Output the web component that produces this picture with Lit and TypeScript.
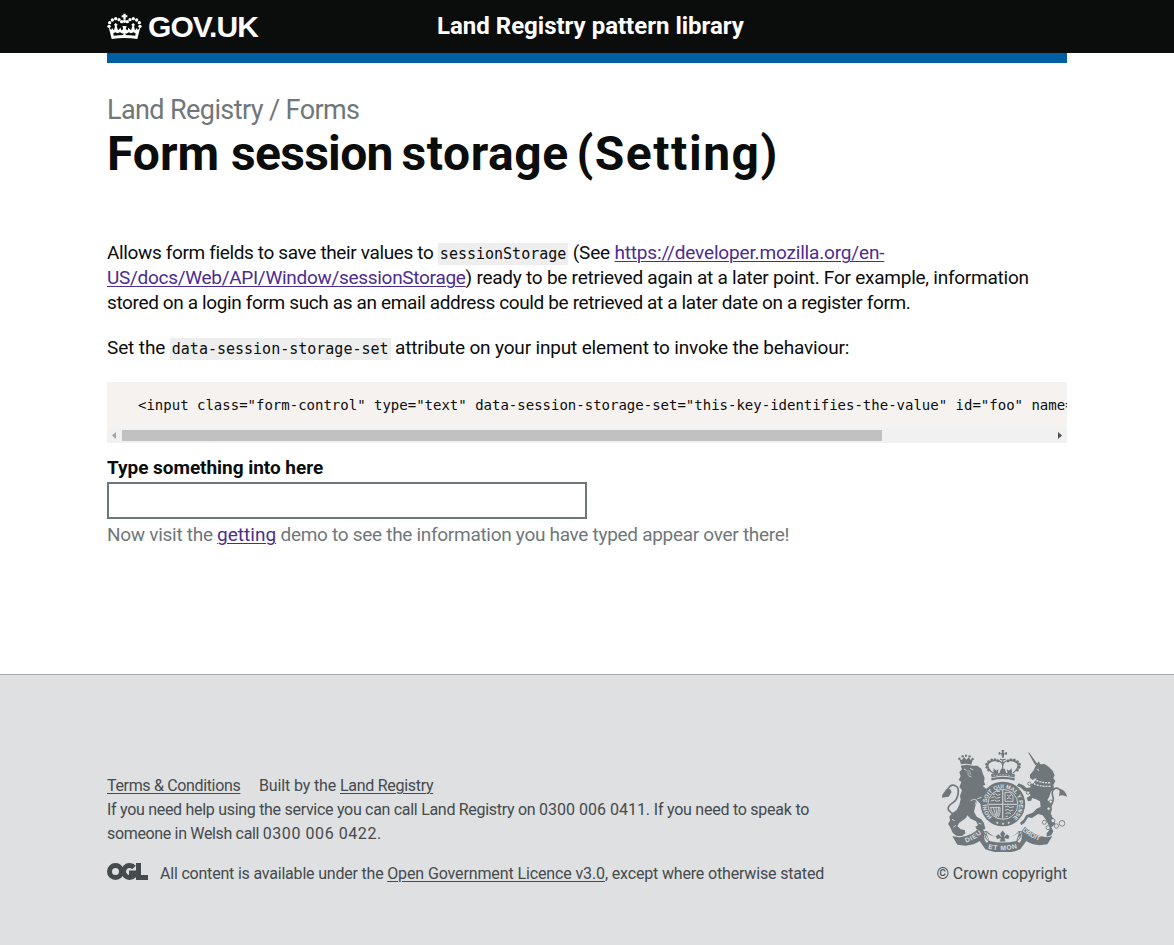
import { LitElement, html, css, svg } from "lit";
import { customElement } from "lit/decorators.js";

const beads = (pts: number[][], r: number) =>
  pts.map(([x, y]) => svg`<circle cx=${x} cy=${y} r=${r} />`);

@customElement("crown-logo")
class CrownLogo extends LitElement {
  static styles = css`
    :host { display: block; width: 36px; height: 27px; }
    svg { display: block; }
  `;
  render() {
    return html`<svg width="36" height="27" viewBox="21 36 108 81" fill="#fff">
      <path d="M70 38h7v5h5v6h-5v7h-7v-7h-5v-6h5z" />
      ${beads([[27, 76], [29, 65], [37, 57], [47, 53], [57, 56], [65, 62], [82, 62], [90, 56], [100, 53], [110, 57], [118, 65], [120, 76], [73.5, 61]], 5)}
      <path fill-rule="evenodd" d="M26 79l8 8 2-6 6 7 3-13-3-4 5-5 6 5-3 4 4 13 8-8 2 8 6-3-3-10h13l-3 10 6 3 2-8 8 8 4-13-3-4 6-5 5 5-3 4 3 13 6-7 2 6 8-8-9 35q-38-6-77 0zM40 97l1 7q32-4 65 0l1-7-7-3-7 3-8-4-5 5-7-7-6 7-6-5-8 4-7-3z" />
      <path d="M70 80h7v10h8v6h-8v6h-7v-6h-8v-6h8z" />
    </svg>`;
  }
}

@customElement("royal-arms")
class RoyalArms extends LitElement {
  static styles = css`
    :host { display: block; width: 125px; height: 102px; }
    svg { display: block; }
    text { font-family: "Liberation Sans", Arial, sans-serif; font-weight: 700; }
  `;
  render() {
    return html`<svg width="125" height="102" viewBox="36 30 375 306" fill="#6f777b">
      <defs>
        <path id="garter" d="M186.500 231A49 49 0 1 1 250.500 231" />
        <path id="dieu" d="M108 308Q137 299 158 277" />
        <path id="mon" d="M174 325Q218 337 264 324" />
        <path id="droit" d="M277 272Q300 294 336 305" />
      </defs>

      <!-- lion -->
      <g transform="translate(30 30)">
        <path d="M63 43L58 27l8 3 6-9 7 8 8-8 4 8 8-3-5 18q-16-5-31-1z" />
        ${beads([[78, 17], [58, 26], [68, 19], [89, 19], [98, 27]], 3.5)}
        <path d="M62 47L80 44 98 47 112 47 124 56 129 72 134 84 132 95 136 104 128 108 140 118 134 132 137 150 133 168 124 164 112 152 106 168 102 185 110 200 124 208 132 220 136 236 128 240 110 238 106 230 114 226 108 214 92 206 82 196 78 204 58 218 52 228 62 238 74 240 76 250 66 258 50 258 38 248 30 230 24 222 30 212 28 200 34 192 50 180 58 164 62 148 60 138 66 120 58 112 64 96 56 90 62 78 58 66 66 58Z" />
        <path d="M50 195C20 185 18 172 36 160C58 148 60 112 46 107C34 102 23 112 21 126" fill="none" stroke="#6f777b" stroke-width="5" />
        <path d="M20 116L7 134 6 143 26 140 35 126 31 118Z" />
        <g fill="none" stroke="#dee0e2" stroke-width="2.500">
          <path d="M72 57l8 4M90 55l10 5M84 76l10 5M92 152q9-7 18-2l-4 14M112 146l20-6M36 208l8 4M40 232l8-6M116 220l8 2" />
        </g>
        <path d="M82 60l8 0 5 14-7 4-8-5z" fill="#8d9497" />
      </g>

      <!-- royal crown -->
      <path d="M214 41l-5-5h-3v8h3l5-2 2 11h5l2-11 5 2h3v-8h-3l-5 5-2-5 2-6h-9l2 6z" />
      <g fill="none" stroke="#6f777b">
        <path d="M190 100Q169 84 175 71Q188 56 209 64Q219 68 218 78Q218 68 228 64Q249 56 263 71Q268 84 248 100M210 57q8 5 17 0M218 60v42" stroke-width="3.500" />
        <path d="M184 108q34-11 70 0" stroke-width="9" />
        <path d="M184 118q34-9 70 0" stroke-width="7" />
      </g>
      ${beads([[176, 90], [171, 82], [170, 73], [176, 65], [185, 60], [195, 59], [204, 62], [262, 90], [267, 82], [268, 73], [262, 65], [253, 60], [243, 59], [234, 62]], 4.5)}
      <path d="M190 102l1-17 8 7 7-5-3 14zM246 102l-1-17-8 7-7-5 3 14zM208 100l5-14h11l5 14z" />
      <path d="M190 108q28-7 57 0" stroke="#dee0e2" stroke-width="2" stroke-dasharray="5 4" fill="none" />

      <!-- garter and shield -->
      <circle cx="218.500" cy="192" r="67" />
      <circle cx="218.500" cy="193" r="45" fill="none" stroke="#dee0e2" stroke-width="2.500" />
      <text fill="#dee0e2" font-size="17"><textPath href="#garter">HONI SOIT QUI MAL Y PENSE</textPath></text>
      <path d="M218 150v86M176 193h85" stroke="#c3c7c9" stroke-width="4" />
      <g fill="none" stroke="#dee0e2" stroke-width="2.500">
        <path d="M188 164l9-3 5 5 9-3M184 173l9-3 6 5 12-3M182 183l12-3 6 4 10-3M200 155l10-1M225 157h15l9 12v15h-24zM231 165l6 4 6-4M230 177l7-4 7 4M225 201l9-3 6 5 12-3M225 211l9-3 6 5 10-3M226 221l8-3 9 3M227 230l7-2" />
        <path d="M182 202q2 20 20 30M190 202l7 24M198 202l3 26M206 202l-3 26M181 202h29q2 16-5 30" />
      </g>
      <g fill="#dee0e2"><circle cx="202" cy="248" r="3" /><circle cx="219" cy="251" r="3" /><circle cx="236" cy="248" r="3" /></g>

      <!-- unicorn -->
      <g transform="translate(258 30)">
        <path d="M36 7l4 1 24 34-6 4z" />
        <path d="M60 46L68 34 73 43 86 42 98 50 110 62 116 76 112 84 118 94 112 104 114 116 104 126 100 140 94 150 104 160 108 176 104 192 112 206 118 222 106 232 112 244 106 256 92 260 92 250 100 240 98 226 90 210 80 196 66 192 48 204 36 202 26 218 16 226 12 218 24 208 30 196 50 188 62 176 74 170 72 154 60 148 48 144 46 152 36 154 32 144 44 136 40 128 24 122 12 112 2 108 8 100 22 106 32 114 44 112 42 104 54 98 62 84 50 90 42 84 42 74 52 62Z" />
        <path d="M106 200C84 172 122 162 110 138C102 112 130 106 136 128" fill="none" stroke="#6f777b" stroke-width="5" />
        <path d="M132 116q16 3 21 24-14-8-24-2z" />
        <path d="M46 97q22 14 60 12M54 87q18 13 52 11" stroke="#dee0e2" stroke-width="4" stroke-dasharray="6 3" fill="none" />
        <path d="M62 58l7 3" stroke="#dee0e2" stroke-width="3" />
        <g fill="#dee0e2" stroke="#6f777b" stroke-width="2.500">
          <circle cx="85" cy="217" r="6" /><circle cx="96" cy="233" r="6" /><circle cx="111" cy="212" r="6" />
          <circle cx="121" cy="228" r="6.500" /><circle cx="138" cy="220" r="8.500" /><circle cx="98" cy="176" r="5" />
          <circle cx="104" cy="155" r="5" /><circle cx="40" cy="101" r="5" /><circle cx="36" cy="128" r="5" />
        </g>
      </g>

      <!-- motto ribbon -->
      <path d="M67 289l22 3Q132 285 149 260l20 20 6-4q-17-12-11 24l5 8 7-3q-1-15-12-22l10-6q20 19 44 18 26 1 46-18l9 6q-10 9-11 22l7 3 5-8q6-36-12-24l7 4 16-20q27 27 65 32l17-3-15 24-23 3q-23-2-40-13l-18 25q-50 21-105 0l-17-25q-16 12-42 14l-25-3z" />
      <path d="M168 275q14 18 50 17 36 1 50-17l-9 28q-40 9-81 0z" fill="#dee0e2" />
      <path d="M163 278q2 18 14 28M274 278q-2 18-14 28" stroke="#6f777b" stroke-width="3" fill="none" />
      <path d="M218 271l-8 10 4 9-9-8-8 7 4 9 11-3-3 10h18l-3-10 11 3 4-9-8-7-9 8 4-9z" stroke="#dee0e2" stroke-width="1" />
      <g fill="#dee0e2" font-size="20">
        <text><textPath href="#dieu" textLength="55">DIEU</textPath></text>
        <text><textPath href="#mon" textLength="89">ET MON</textPath></text>
        <text font-size="19"><textPath href="#droit">DROIT</textPath></text>
      </g>
    </svg>`;
  }
}

@customElement("app-root")
class AppRoot extends LitElement {
  static styles = css`
    :host {
      display: flex; flex-direction: column; min-height: 945px; box-sizing: border-box;
      background: #dee0e2; color: #0b0c0c;
      font: 19px/25px Roboto, "Noto Sans", sans-serif;
    }
    * { box-sizing: border-box; }
    p, h1, pre { margin: 0; }
    a { color: #4c2c92; text-decoration: underline; text-underline-offset: 2px; text-decoration-thickness: 1px; }
    .wrap { width: 960px; margin: 0 auto; white-space: nowrap; }
    header { height: 53px; background: #0b0c0c; color: #fff; }
    header .wrap { display: flex; align-items: center; height: 53px; }
    .logo { display: flex; align-items: center; gap: 5px; width: 330px; }
    .gov { font: 700 30px/30px "Liberation Sans", Arial, sans-serif; letter-spacing: -0.95px; }
    .service { font-size: 24px; font-weight: 700; }
    .bar { height: 10px; background: #005ea5; }
    main { height: 621px; background: #fff; }
    .crumb { display: block; color: #6f777b; font-size: 27px; line-height: 30px; padding-top: 32px; letter-spacing: -0.6px; }
    h1 { font-size: 48px; line-height: 50px; font-weight: 700; padding-top: 4px; }
    .h-session { letter-spacing: -0.7px; word-spacing: -2.5px; }
    .h-storage { letter-spacing: 0.6px; word-spacing: -5px; }
    .h-setting { letter-spacing: 1.55px; }
    .intro { padding-top: 61px; }
    .line { display: block; }
    .set { padding-top: 20px; }
    .k35 { letter-spacing: -0.36px; }
    .k34 { letter-spacing: -0.34px; }
    .k36 { letter-spacing: -0.37px; }
    .k29 { letter-spacing: -0.295px; }
    .k28 { letter-spacing: -0.28px; }
    .k24 { letter-spacing: -0.245px; }
    .k20 { letter-spacing: -0.2px; }
    .k17 { letter-spacing: -0.165px; }
    .k12 { letter-spacing: -0.12px; }
    .wide { letter-spacing: 0.57px; }
    code { font: 15px/20px "DejaVu Sans Mono", monospace; background: #eee; padding: 2px; }
    .code { margin-top: 22px; height: 61px; background: #f5f2f0; overflow: hidden; display: flex; flex-direction: column; justify-content: space-between; }
    pre { font: 14px/20px "DejaVu Sans Mono", monospace; padding: 13px 0 0 31px; }
    .scroll { height: 15px; background: #f1f1f1; display: flex; align-items: center; justify-content: space-between; }
    .thumb { width: 760px; height: 11px; background: #c1c1c1; }
    .arrow { width: 15px; height: 15px; }
    .gap { flex: 1; }
    label { display: block; font-weight: 700; padding-top: 12px; letter-spacing: -0.04px; }
    input { display: block; width: 480px; height: 37px; margin: 2px 0 3px; border: 2px solid #6f777b; background: #fff; padding: 4px; }
    .hint { color: #6f777b; }
    footer { flex: 1; border-top: 1px solid #a1acb2; color: #454a4c; font-size: 16px; line-height: 24px; }
    footer a { color: #454a4c; }
    footer .wrap { display: flex; justify-content: space-between; padding-top: 75px; }
    .meta { padding-top: 24px; }
    .links { display: flex; gap: 18.500px; }
    .licence { display: flex; align-items: center; padding-top: 16px; gap: 12px; }
    .ogl { display: block; margin-top: -5px; }
    .arms { display: flex; flex-direction: column; align-items: flex-end; gap: 10px; }
  `;
  render() {
    return html`
      <header><div class="wrap">
        <div class="logo"><crown-logo></crown-logo><span class="gov">GOV.UK</span></div>
        <span class="service">Land Registry pattern library</span>
      </div></header>
      <main><div class="wrap">
        <div class="bar"></div>
        <span class="crumb">Land Registry / Forms</span>
        <h1>Form <span class="h-session">session </span><span class="h-storage">storage </span><span class="h-setting">(Setting)</span></h1>
        <p class="intro">
          <span class="line"><span class="k35">Allows form fields to save their values to </span><code>sessionStorage</code><span class="k20"> (See </span><a class="k17">https://developer.mozilla.org/en-</a></span>
          <span class="line"><a class="k29">US/docs/Web/API/Window/sessionStorage</a><span class="k24">) ready to be retrieved again at a later point. For example, information</span></span>
          <span class="line k36">stored on a login form such as an email address could be retrieved at a later date on a register form.</span>
        </p>
        <p class="set"><span class="k12">Set the </span><code>data-session-storage-set</code><span class="k17"> attribute on your input element to invoke the behaviour:</span></p>
        <div class="code">
          <pre>&lt;input class="form-control" type="text" data-session-storage-set="this-key-identifies-the-value" id="foo" name="foo"&gt;</pre>
          <div class="scroll">
            <svg class="arrow" viewBox="0 0 15 15"><path d="M9 4v7L5 7.500z" fill="#a3a3a3" /></svg>
            <div class="thumb"></div><div class="gap"></div>
            <svg class="arrow" viewBox="0 0 15 15"><path d="M6 4v7l4-3.500z" fill="#505050" /></svg>
          </div>
        </div>
        <label for="foo">Type something into here</label>
        <input id="foo" type="text" />
        <div class="hint"><span class="k28">Now visit the </span><a>getting</a><span class="k29"> demo to see the information you have typed appear over there!</span></div>
      </div></main>
      <footer><div class="wrap">
        <div class="meta">
          <div class="links"><a class="k34">Terms &amp; Conditions</a><span><span class="k12">Built by the </span><a class="k29">Land Registry</a></span></div>
          <div><span class="k29">If you need help using the service you can call Land Registry on </span>0300 006 0411.<span class="k24"> If you need to speak to</span></div>
          <div><span class="k34">someone in Welsh call </span><span class="wide">0300 006 0422.</span></div>
          <div class="licence">
            <svg class="ogl" width="41" height="17" viewBox="0 0 41 17" fill="none" stroke="#454a4c" stroke-width="5">
              <circle cx="8.500" cy="8.500" r="6" />
              <path d="M27 4.500A6 6 0 1 0 27 12.500V10h-5M31.500 0v14.500H41" />
            </svg>
            <span><span class="k20">All content is available under the </span><a class="k12">Open Government Licence v3.0</a><span class="k17">, except where otherwise stated</span></span>
          </div>
        </div>
        <div class="arms"><royal-arms></royal-arms><span class="k12">© Crown copyright</span></div>
      </div></footer>
    `;
  }
}
